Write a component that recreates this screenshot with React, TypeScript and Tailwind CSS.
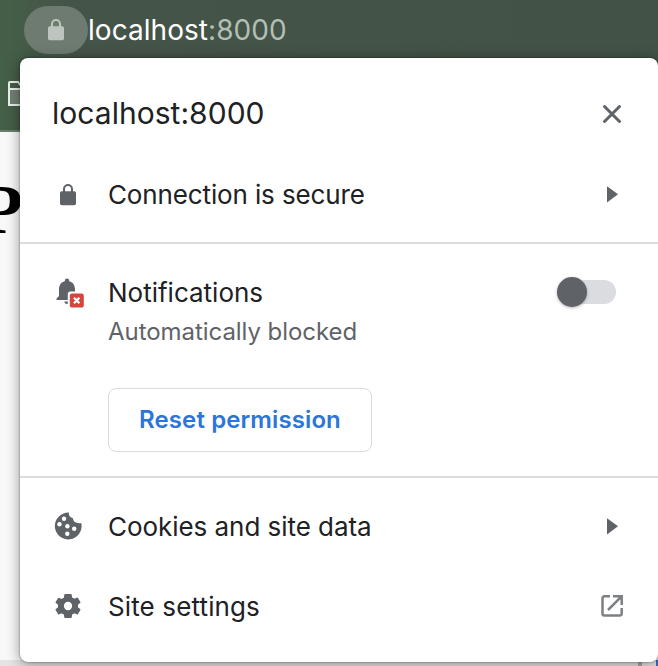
import type { ReactNode } from "react";

function Lock({ className }: { className: string }) {
  return (
    <svg className={className} width="16" height="22" viewBox="0 0 16 22">
      <path d="M4 8V5a4 4 0 0 1 8 0v3" fill="none" stroke="currentColor" strokeWidth="2" />
      <rect y="7.3" width="16" height="14" rx="1.8" fill="currentColor" />
    </svg>
  );
}

function Bell() {
  return (
    <svg width="28" height="30" viewBox="0 0 28 30">
      <path d="M11 .5a2.200 2.200 0 0 1 2.200 2.200v.5c3.700.9 5.800 4 5.800 7.900V18l3 2.600V22H.5v-1.400L3 18v-6.900c0-3.900 2.100-7 5.800-7.900v-.5A2.200 2.200 0 0 1 11 .5Z" fill="#5f6368" />
      <path d="M8.400 23.600h5.200a2.600 2.400 0 0 1-5.200 0Z" fill="#5f6368" />
      <rect x="11.800" y="13.500" width="17" height="17" rx="2.500" fill="white" />
      <rect x="13.800" y="15.600" width="14" height="14" rx="2.200" fill="#d5453c" />
      <path d="m18 19.800 5.400 5.400m0-5.400-5.400 5.400" stroke="white" strokeWidth="2.200" />
    </svg>
  );
}

function Cookie() {
  return (
    <svg width="28" height="28" viewBox="0 0 28 28">
      <path d="M15 .6a4.600 4.600 0 0 0 4 5.700 4.500 4.500 0 0 0 5.200 4.600c.8.500 1.800.6 3.100.2A13.400 13.400 0 1 1 15 .6Z" fill="#5f6368" />
      <g fill="white">
        <circle cx="10" cy="6.800" r="2.200" />
        <circle cx="5.500" cy="12.200" r="2.200" />
        <circle cx="13.400" cy="14.300" r="2.200" />
        <circle cx="20.200" cy="16.800" r="2.200" />
        <circle cx="13.300" cy="21.700" r="2.200" />
      </g>
    </svg>
  );
}

function Gear() {
  return (
    <svg width="32" height="32" viewBox="0 0 24 24" fill="#5f6368">
      <path d="M19.440 12.990c.04-.32.060-.65.060-.99s-.02-.67-.06-.99l1.730-1.350a.5.5 0 0 0 .12-.64l-1.790-3.100a.5.500 0 0 0-.61-.22l-2.100.84a7.400 7.400 0 0 0-1.710-.99l-.32-2.230A.5.500 0 0 0 14.270 3h-4.540a.5.500 0 0 0-.49.520l-.32 2.230c-.61.250-1.180.590-1.710.99l-2.100-.84a.5.500 0 0 0-.61.220L2.710 9.020a.5.500 0 0 0 .12.640l1.730 1.350a8 8 0 0 0 0 1.980l-1.730 1.350a.5.500 0 0 0-.12.640l1.790 3.100c.12.220.38.300.61.220l2.100-.84c.53.400 1.100.740 1.710.99l.32 2.230c.03.240.24.320.49.320h4.540c.25 0 .46-.18.490-.42l.32-2.130c.61-.25 1.180-.59 1.710-.99l2.100.84c.23.080.49 0 .61-.22l1.790-3.100a.5.500 0 0 0-.12-.64l-1.730-1.350ZM12 15.100a3.100 3.100 0 1 1 0-6.200 3.100 3.100 0 0 1 0 6.200Z" />
    </svg>
  );
}

function Arrow() {
  return (
    <svg width="24" height="24" viewBox="0 0 24 24">
      <path d="m7 3.200 11 8.100-11 8.100Z" fill="#5f6368" />
    </svg>
  );
}

function External() {
  return (
    <svg className="mb-0.5" width="24" height="24" viewBox="0 0 24 24" fill="none" stroke="#7d8083" strokeWidth="2.500">
      <path d="M10 2.300H4.300a1.800 1.800 0 0 0-1.800 1.800v15.600a1.800 1.800 0 0 0 1.800 1.800h15.600a1.800 1.800 0 0 0 1.800-1.800V14M13 2.300h8.700v8.700M21.300 2.700 8 16" />
    </svg>
  );
}

function Row({ icon, label, end, className }: { icon: ReactNode; label: ReactNode; end: ReactNode; className: string }) {
  return (
    <div className={`flex items-center pl-7 pr-[34px] ${className}`}>
      <span className="flex w-10 shrink-0 justify-center">{icon}</span>
      <span className="ml-5 flex-1 whitespace-nowrap pb-0.5 text-[26px] text-[#202124]">{label}</span>
      {end}
    </div>
  );
}

export default function App() {
  return (
    <div className="relative flex h-[666px] w-[658px] flex-col overflow-hidden bg-[#f8f8f9] font-['Inter',sans-serif]">
      <header className="h-[132px] shrink-0 border-b-2 border-[#6c7d6d] bg-linear-to-r from-[#446047] via-[#455448] via-10% to-[#425246]">
        <div className="flex h-[60px] items-center pl-6">
          <div className="flex h-12 w-16 items-center justify-center rounded-full bg-[#6d7b70]">
            <Lock className="text-[#bec5c0]" />
          </div>
          <span className="whitespace-nowrap text-[28px] tracking-[0.05px] text-white">
            localhost<span className="text-[#b2bfb4]">:8000</span>
          </span>
        </div>
        <svg className="ml-2 mt-5" width="28" height="27" viewBox="0 0 28 27" fill="none" stroke="#e9f0e9" strokeWidth="2">
          <path d="M1 9h26v16H1Z" fill="#718172" />
          <path d="M1 25V3q0-1 1-1h8l3 4h14v19Z" />
        </svg>
      </header>
      <main className="-ml-5 flex-1 pt-[38px] font-['Liberation_Serif',serif] text-[70px] font-bold leading-[80px] text-black">P</main>
      <footer className="flex h-1.5 shrink-0 justify-end bg-[#e4e4e4]">
        <span className="mr-[14px] w-1 bg-[#a9a9ab]" />
        <span className="w-0.5 bg-[#2f6bd6]" />
      </footer>

      <section className="absolute left-5 top-[58px] flex h-[604px] w-[638px] flex-col rounded-[8px] bg-white shadow-[0_2px_14px_rgba(0,0,0,0.4),0_0_2px_rgba(0,0,0,0.5)]">
        <div className="flex h-28 items-center justify-between pl-8 pr-9">
          <h1 className="whitespace-nowrap pb-0.5 text-[30px] tracking-[0.03px] text-[#202124]">localhost:8000</h1>
          <svg width="20" height="20" viewBox="0 0 20 20" stroke="#5f6368" strokeWidth="3" strokeLinecap="round">
            <path d="m2.500 2.500 15 15m0-15-15 15" />
          </svg>
        </div>
        <Row className="h-[50px] tracking-[-0.13px]" icon={<Lock className="text-[#5f6368]" />} label="Connection is secure" end={<Arrow />} />
        <hr className="mt-[22px] h-0.5 shrink-0 border-0 bg-[#dcdcdd]" />
        <Row
          className="mt-[29px] h-10"
          icon={<span className="ml-1"><Bell /></span>}
          label="Notifications"
          end={
            <span className="mb-[2px] mr-2 flex h-6 w-[58px] items-center rounded-full bg-[#dadce0]">
              <span className="-ml-px size-[30px] rounded-full bg-[#5f6368] shadow-[0_1px_3px_rgba(0,0,0,0.3)]" />
            </span>
          }
        />
        <p className="pl-[88px] text-2xl leading-[38px] tracking-[-0.05px] text-[#5f6368]">Automatically blocked</p>
        <button className="ml-[88px] mt-[37px] h-16 w-[264px] shrink-0 whitespace-nowrap rounded-lg border border-[#dadce0] text-2xl font-[580] tracking-[0.1px] text-[#2b76d8]">
          Reset permission
        </button>
        <hr className="mt-6 h-0.5 shrink-0 border-0 bg-[#dcdcdd]" />
        <Row className="mt-[9px] h-20 tracking-[-0.05px]" icon={<span className="mb-0.5"><Cookie /></span>} label="Cookies and site data" end={<Arrow />} />
        <Row className="h-20 tracking-[0.13px]" icon={<span className="mb-0.5"><Gear /></span>} label="Site settings" end={<External />} />
      </section>
    </div>
  );
}
